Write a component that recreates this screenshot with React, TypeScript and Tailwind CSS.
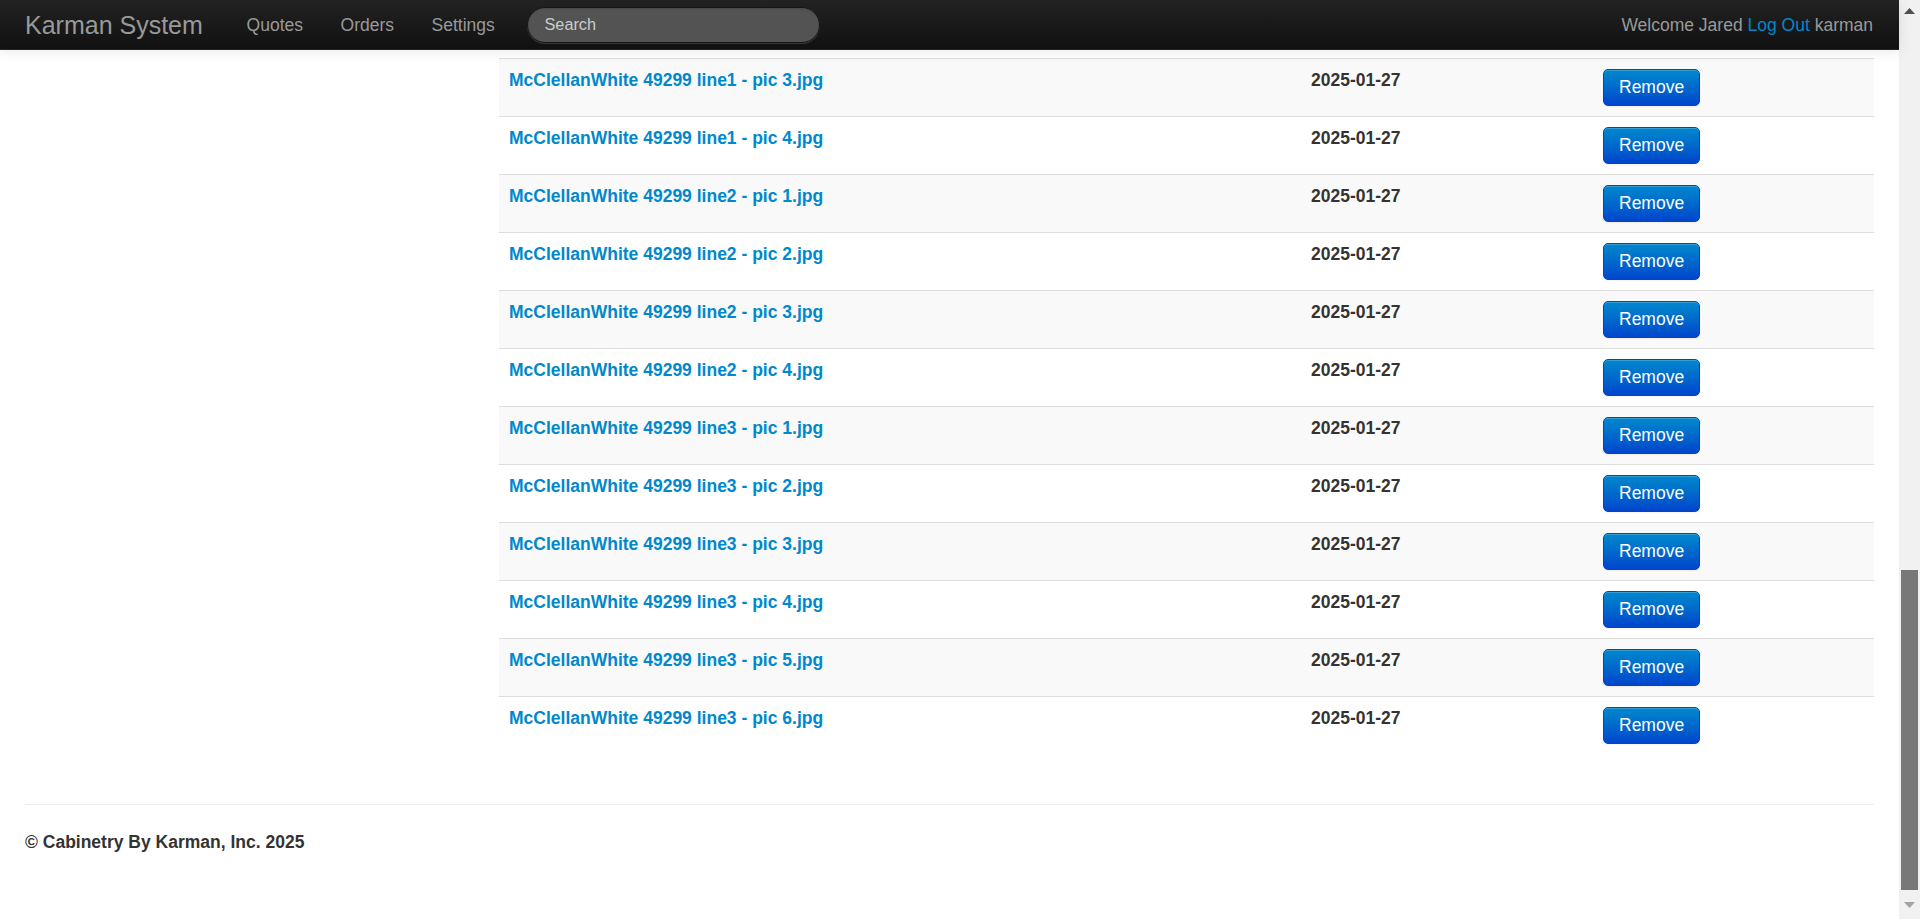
import React from "react";

const files = [
  "line1 - pic 3",
  "line1 - pic 4",
  "line2 - pic 1",
  "line2 - pic 2",
  "line2 - pic 3",
  "line2 - pic 4",
  "line3 - pic 1",
  "line3 - pic 2",
  "line3 - pic 3",
  "line3 - pic 4",
  "line3 - pic 5",
  "line3 - pic 6",
];

function Navbar() {
  return (
    <div className="relative z-10 h-[50px] bg-gradient-to-b from-[#222222] to-[#111111] border-b border-[#252525] shadow-[0_1px_12px_rgba(0,0,0,0.1)]">
      <div className="flex items-center h-full pl-[25px] pr-[26px]">
        <span className="text-[25px] leading-[25px] text-[#999999] pr-[25px] pt-[2px]">Karman System</span>
        <nav className="flex items-center">
          <span className="px-[18.75px] text-[17.5px] leading-[25px] text-[#999999] pt-[1px]">Quotes</span>
          <span className="px-[18.75px] text-[17.5px] leading-[25px] text-[#999999] pt-[1px]">Orders</span>
          <span className="px-[18.75px] text-[17.5px] leading-[25px] text-[#999999] pt-[1px]">Settings</span>
        </nav>
        <div className="ml-[13px] w-[293px] h-[36px] rounded-full bg-[#535353] border border-[#151515] shadow-[inset_0_1px_2px_rgba(0,0,0,0.1),0_1px_0_rgba(255,255,255,0.15)] flex items-center pl-[17px]">
          <span className="text-[16.25px] text-[#cccccc]">Search</span>
        </div>
        <div className="ml-auto text-[17.5px] leading-[25px] text-[#999999] pt-[1px]">
          Welcome Jared <span className="text-[#0088cc]">Log Out</span> karman
        </div>
      </div>
    </div>
  );
}

function Row({ name, odd }: { name: string; odd: boolean }) {
  return (
    <div
      className={
        "grid grid-cols-[802px_292px_1fr] border-t border-[#dddddd] " +
        (odd ? "bg-[#f9f9f9]" : "bg-white")
      }
    >
      <div className="px-[10px] pt-[9px] pb-[10px] text-[17.5px] leading-[25px] font-bold text-[#0088cc]">
        McClellanWhite 49299 {name}.jpg
      </div>
      <div className="px-[10px] pt-[9px] pb-[10px] text-[17.5px] leading-[25px] font-bold text-[#333333]">
        2025-01-27
      </div>
      <div className="px-[10px] py-[10px]">
        <button className="h-[37px] px-[15px] rounded-[5px] border border-[#0044cc] bg-gradient-to-b from-[#0088cc] to-[#0044cc] text-white text-[17.5px] leading-[25px] shadow-[inset_0_1px_0_rgba(255,255,255,0.2),0_1px_2px_rgba(0,0,0,0.05)]">
          Remove
        </button>
      </div>
    </div>
  );
}

function Scrollbar() {
  return (
    <div className="w-[21px] shrink-0 h-full bg-[#f1f1f1] flex flex-col items-center">
      <div className="h-[21px] w-full flex items-center justify-center">
        <svg width="11" height="6" viewBox="0 0 11 6">
          <polygon points="0,6 11,6 5.5,0" fill="#505050" />
        </svg>
      </div>
      <div className="h-[549px]" />
      <div className="w-[17px] h-[320px] bg-[#787878]" />
      <div className="flex-1 w-full flex items-center justify-center">
        <svg width="11" height="6" viewBox="0 0 11 6">
          <polygon points="0,0 11,0 5.5,6" fill="#a3a3a3" />
        </svg>
      </div>
    </div>
  );
}

export default function App() {
  return (
    <div className="h-[919px] w-[1920px] overflow-hidden flex bg-white font-['Liberation_Sans',Arial,sans-serif]">
      <div className="flex-1 flex flex-col min-w-0">
        <Navbar />
        <div className="px-[25px]">
          <div className="flex pt-[8px]">
            <div className="w-[474px] shrink-0" />
            <div className="flex-1">
              {files.map((f, i) => (
                <Row key={f} name={f} odd={i % 2 === 0} />
              ))}
            </div>
          </div>
          <div className="mt-[50px] border-t border-[#eeeeee]" />
          <div className="mt-[25px] text-[17.5px] leading-[25px] font-bold text-[#333333]">
            © Cabinetry By Karman, Inc. 2025
          </div>
        </div>
      </div>
      <Scrollbar />
    </div>
  );
}
